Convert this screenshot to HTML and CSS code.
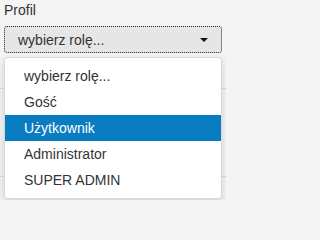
FILE: index.html
```html
<!DOCTYPE html>
<html lang="pl">
<head>
<meta charset="utf-8">
<title>Profil</title>
<link rel="stylesheet" href="styles.css">
</head>
<body>
<div class="page">
  <div class="field">
    <label class="label">Profil</label>
    <div class="dropdown">
      <button class="select" type="button">
        <span class="select-text">wybierz rolę...</span>
        <span class="caret"></span>
      </button>
      <ul class="menu">
        <li class="item">wybierz rolę...</li>
        <li class="item">Gość</li>
        <li class="item active">Użytkownik</li>
        <li class="item">Administrator</li>
        <li class="item">SUPER ADMIN</li>
      </ul>
    </div>
  </div>
  <div class="rows">
    <div class="row"></div>
    <div class="row"></div>
  </div>
</div>
</body>
</html>
```

FILE: styles.css
```css
html, body {
  margin: 0;
  padding: 0;
  background: #f4f4f4;
}
body {
  font-family: "Liberation Sans", Arial, sans-serif;
  color: #333;
  font-size: 14px;
}
.page {
  width: 226px;
  height: 200px;
  overflow: hidden;
}
.field {
  padding: 2px 4px 0 4px;
}
.label {
  display: block;
  font-size: 14px;
  line-height: 17px;
  margin-bottom: 7px;
}
.dropdown {
  position: relative;
}
.select {
  display: flex;
  align-items: center;
  justify-content: space-between;
  width: 218px;
  height: 27px;
  margin: 0;
  padding: 0 13px 0 13px;
  background: #e6e6e6;
  border: 1px dotted #222;
  border-radius: 3px;
  font-family: "Liberation Sans", Arial, sans-serif;
  font-size: 14px;
  color: #333;
  box-sizing: border-box;
}
.caret {
  width: 0;
  height: 0;
  border-top: 4px solid #111;
  border-left: 4px solid transparent;
  border-right: 4px solid transparent;
  margin-right: 0;
}
.menu {
  position: absolute;
  top: 31px;
  left: 0;
  z-index: 10;
  width: 218px;
  box-sizing: border-box;
  margin: 0;
  padding: 5px 0;
  list-style: none;
  background: #fff;
  border: 1px solid rgba(0,0,0,0.15);
  border-radius: 4px;
  box-shadow: 0 3px 8px rgba(0,0,0,0.15);
}
.item {
  height: 26px;
  line-height: 26px;
  padding-left: 19px;
  font-size: 14px;
  color: #333;
}
.item.active {
  background: #0a7cc1;
  color: #fff;
}
.rows {
  margin-top: 35px;
}
.row {
  height: 87px;
  border-top: 1px solid #dcdcdc;
}
```
